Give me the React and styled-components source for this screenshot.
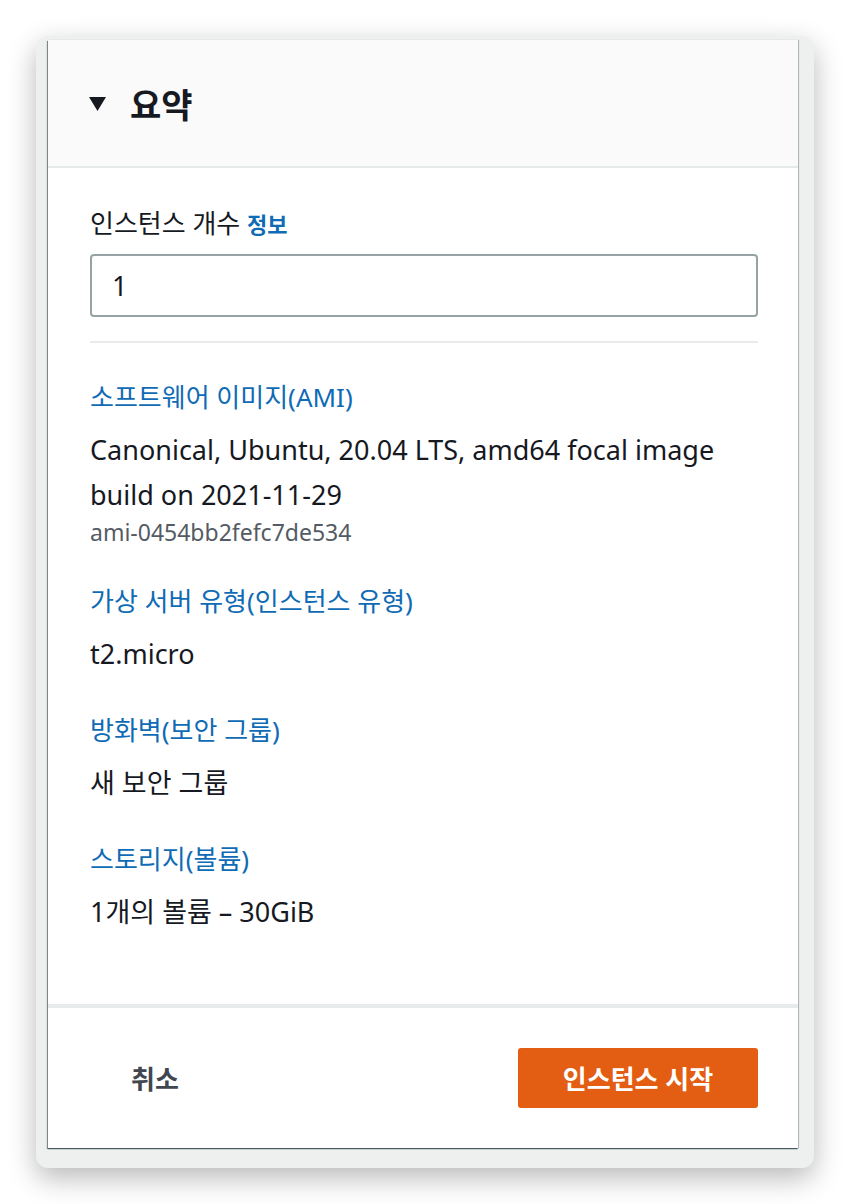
import styled, { createGlobalStyle } from "styled-components";

const GlobalStyle = createGlobalStyle`
  body {
    margin: 0;
    background: #ffffff;
    font-family: "Noto Sans", "Noto Sans CJK KR", sans-serif;
    color: #16191f;
  }
`;

const summary = [
  {
    title: "소프트웨어 이미지(AMI)",
    lines: ["Canonical, Ubuntu, 20.04 LTS, amd64 focal image build on 2021-11-29"],
    sub: "ami-0454bb2fefc7de534",
  },
  { title: "가상 서버 유형(인스턴스 유형)", lines: ["t2.micro"] },
  { title: "방화벽(보안 그룹)", lines: ["새 보안 그룹"] },
  { title: "스토리지(볼륨)", lines: ["1개의 볼륨 – 30GiB"] },
];

function App() {
  return (
    <Page>
      <GlobalStyle />
      <Frame>
        <Panel>
          <Header>
            <Caret viewBox="0 0 17 14">
              <path d="M0 0 H17 L8.5 14 Z" fill="#16191f" />
            </Caret>
            <Title>요약</Title>
          </Header>
          <Body>
            <Label>
              인스턴스 개수 <Info>정보</Info>
            </Label>
            <Input defaultValue="1" />
            <Divider />
            {summary.map((s) => (
              <Section key={s.title}>
                <SectionTitle>{s.title}</SectionTitle>
                {s.lines.map((l) => (
                  <Value key={l}>{l}</Value>
                ))}
                {s.sub && <SubValue>{s.sub}</SubValue>}
              </Section>
            ))}
          </Body>
          <Footer>
            <CancelButton>취소</CancelButton>
            <LaunchButton>인스턴스 시작</LaunchButton>
          </Footer>
        </Panel>
      </Frame>
    </Page>
  );
}

export default App;

const Page = styled.div`
  padding: 36px;
`;

const Frame = styled.div`
  width: 778px;
  height: 1132px;
  box-sizing: border-box;
  padding: 4px 16px 20px 12px;
  background: #eef0ef;
  border-radius: 12px;
  box-shadow: 0 10px 28px rgba(0, 0, 0, 0.28);
`;

const Panel = styled.div`
  height: 100%;
  display: flex;
  flex-direction: column;
  background: #ffffff;
  box-shadow: -1px 1px 1px rgba(0, 28, 36, 0.45), 1px 0 1px rgba(0, 28, 36, 0.2),
    0 1px 1px rgba(0, 28, 36, 0.45);
`;

const Header = styled.div`
  height: 126px;
  display: flex;
  align-items: center;
  padding-left: 41px;
  background: #fafafa;
  border-bottom: 2px solid #e6eaea;
`;

const Caret = styled.svg`
  width: 17px;
  height: 14px;
  margin-right: 24px;
  margin-top: 2px;
`;

const Title = styled.h2`
  margin: 0;
  font-size: 34px;
  font-weight: 700;
  color: #16191f;
`;

const Body = styled.div`
  flex: 1;
  padding: 37px 40px 0 42px;
  border-bottom: 4px solid #e8ebeb;
`;

const Label = styled.div`
  font-size: 26px;
  line-height: 36px;
`;

const Info = styled.span`
  color: #0f6bb5;
  font-weight: 700;
  font-size: 22px;
`;

const Input = styled.input`
  display: block;
  width: 100%;
  box-sizing: border-box;
  height: 63px;
  margin-top: 12px;
  padding: 0 20px;
  border: 2px solid #95a3a4;
  border-radius: 4px;
  font-family: inherit;
  font-size: 27px;
  color: #16191f;
  outline: none;
`;

const Divider = styled.div`
  height: 2px;
  background: #e9ebed;
  margin-top: 24px;
  margin-bottom: 36px;
`;

const Section = styled.div`
  margin-bottom: 36px;
`;

const SectionTitle = styled.div`
  font-size: 26px;
  line-height: 36px;
  color: #0f6bb5;
  margin-bottom: 12px;
`;

const Value = styled.div`
  font-size: 27px;
  line-height: 45px;
  color: #16191f;
`;

const SubValue = styled.div`
  font-size: 23px;
  line-height: 30px;
  color: #545b64;
`;

const Footer = styled.div`
  height: 140px;
  display: flex;
  align-items: center;
  justify-content: space-between;
  padding: 0 40px 0 83px;
`;

const CancelButton = styled.button`
  border: none;
  background: none;
  padding: 0;
  font-family: inherit;
  font-size: 26px;
  font-weight: 700;
  color: #414750;
`;

const LaunchButton = styled.button`
  width: 240px;
  height: 60px;
  border: none;
  border-radius: 3px;
  background: #e35d12;
  color: #ffffff;
  font-family: inherit;
  font-size: 26px;
  font-weight: 700;
`;
